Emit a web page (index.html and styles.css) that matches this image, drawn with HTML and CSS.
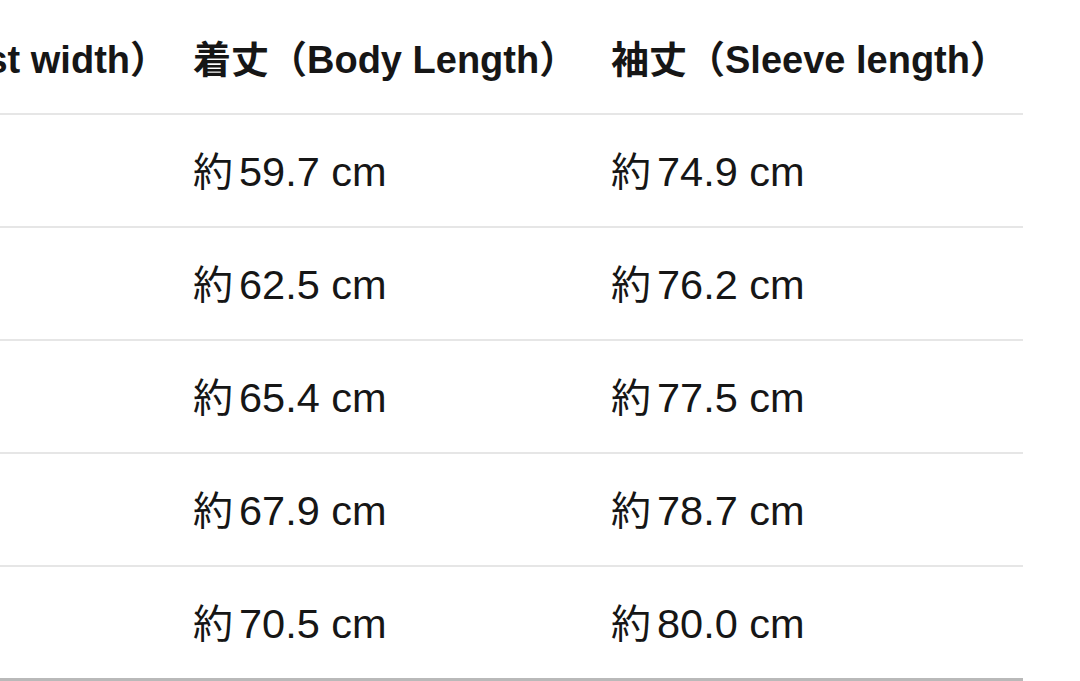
FILE: index.html
```html
<!DOCTYPE html>
<html lang="ja">
<head>
<meta charset="utf-8">
<title>サイズ表</title>
<link rel="stylesheet" href="styles.css">
</head>
<body>
<div class="scroller">
  <table class="size-table">
    <colgroup>
      <col class="col-chest">
      <col class="col-body">
      <col class="col-sleeve">
    </colgroup>
    <thead>
      <tr>
        <th>身幅（Chest width）</th>
        <th>着丈（Body Length）</th>
        <th>袖丈（Sleeve length）</th>
      </tr>
    </thead>
    <tbody>
      <tr><td><span class="approx">約</span>52.0 cm</td><td><span class="approx">約</span>59.7 cm</td><td><span class="approx">約</span>74.9 cm</td></tr>
      <tr><td><span class="approx">約</span>54.5 cm</td><td><span class="approx">約</span>62.5 cm</td><td><span class="approx">約</span>76.2 cm</td></tr>
      <tr><td><span class="approx">約</span>57.0 cm</td><td><span class="approx">約</span>65.4 cm</td><td><span class="approx">約</span>77.5 cm</td></tr>
      <tr><td><span class="approx">約</span>59.5 cm</td><td><span class="approx">約</span>67.9 cm</td><td><span class="approx">約</span>78.7 cm</td></tr>
      <tr><td><span class="approx">約</span>62.0 cm</td><td><span class="approx">約</span>70.5 cm</td><td><span class="approx">約</span>80.0 cm</td></tr>
    </tbody>
  </table>
</div>
</body>
</html>
```
FILE: styles.css
```css
html, body {
  margin: 0;
  padding: 0;
  background: #ffffff;
}

body {
  font-family: "Liberation Sans", "Noto Sans CJK JP", sans-serif;
  color: #161616;
  overflow: hidden;
}

.scroller {
  width: 1023px;
  display: flex;
  justify-content: flex-end;
  overflow: hidden;
}

.size-table {
  flex-shrink: 0;
  border-collapse: collapse;
  border-spacing: 0;
}

.col-body {
  width: 418px;
}

.col-sleeve {
  width: 437px;
}

.size-table th,
.size-table td {
  text-align: left;
  white-space: nowrap;
  padding: 0 0 0 25px;
  vertical-align: middle;
  box-sizing: border-box;
}

.size-table th {
  height: 114px;
  font-size: 38px;
  font-weight: 700;
  border-bottom: 2px solid #e6e6e6;
}

.size-table td {
  height: 113px;
  padding-bottom: 3px;
  font-size: 41.5px;
  font-weight: 400;
  border-bottom: 2px solid #e6e6e6;
}

.approx {
  font-size: 40px;
  margin-right: 6px;
}

.size-table tbody tr:last-child td {
  border-bottom: 3px solid #b9b9b9;
}
```
